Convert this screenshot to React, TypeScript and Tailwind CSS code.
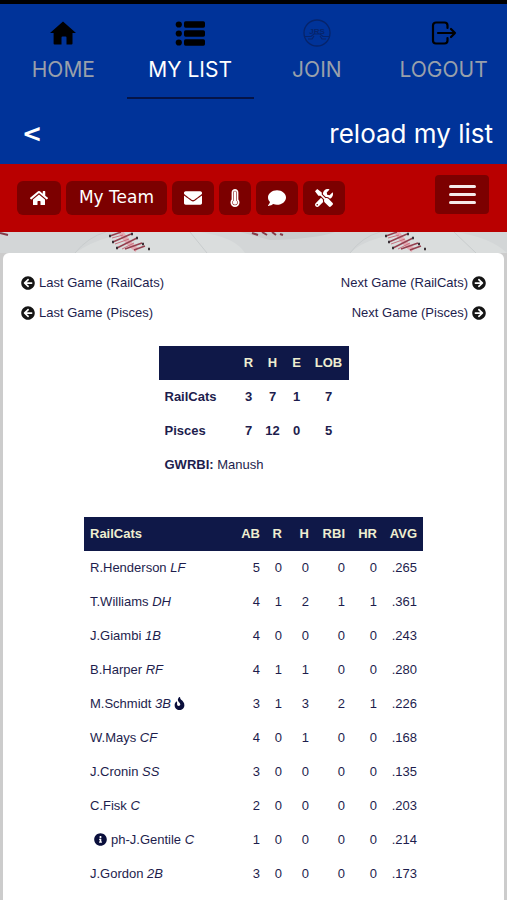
import React from 'react';
import { FaHome, FaEnvelope, FaThermometerFull, FaComment, FaTools, FaArrowCircleLeft, FaArrowCircleRight, FaInfoCircle, FaFire } from 'react-icons/fa';

const players = [
  { name: 'R.Henderson', pos: 'LF', stats: ['5', '0', '0', '0', '0', '.265'] },
  { name: 'T.Williams', pos: 'DH', stats: ['4', '1', '2', '1', '1', '.361'] },
  { name: 'J.Giambi', pos: '1B', stats: ['4', '0', '0', '0', '0', '.243'] },
  { name: 'B.Harper', pos: 'RF', stats: ['4', '1', '1', '0', '0', '.280'] },
  { name: 'M.Schmidt', pos: '3B', hot: true, stats: ['3', '1', '3', '2', '1', '.226'] },
  { name: 'W.Mays', pos: 'CF', stats: ['4', '0', '1', '0', '0', '.168'] },
  { name: 'J.Cronin', pos: 'SS', stats: ['3', '0', '0', '0', '0', '.135'] },
  { name: 'C.Fisk', pos: 'C', stats: ['2', '0', '0', '0', '0', '.203'] },
  { name: 'ph-J.Gentile', pos: 'C', sub: true, stats: ['1', '0', '0', '0', '0', '.214'] },
  { name: 'J.Gordon', pos: '2B', stats: ['3', '0', '0', '0', '0', '.173'] },
];

const scores = [
  { team: 'RailCats', line: ['3', '7', '1', '7'] },
  { team: 'Pisces', line: ['7', '12', '0', '5'] },
];

const HomeTabIcon = () => (
  <svg viewBox="0 0 26 24" className="h-6 w-[26px]" fill="#000">
    <path d="M13 0.500 26 12H22.500V22.500a1 1 0 0 1-1 1H16.500v-7a1 1 0 0 0-1-1h-3a1 1 0 0 0-1 1v7H4.600a1 1 0 0 1-1-1V12H0z" />
  </svg>
);

const ListTabIcon = () => (
  <svg viewBox="0 0 30 25" className="h-[25px] w-[30px]" fill="#000">
    {[3.5, 12.5, 21.5].map((y) => (
      <g key={y}>
        <circle cx="3.800" cy={y} r="3.100" />
        <rect x="9" y={y - 3.2} width="21" height="6.400" rx="1.600" />
      </g>
    ))}
  </svg>
);

const LogoutTabIcon = () => (
  <svg viewBox="0 0 26 24" className="h-6 w-[26px]" fill="none" stroke="#000" strokeWidth="2.200" strokeLinecap="round" strokeLinejoin="round">
    <path d="M16.500 7V4.500a3 3 0 0 0-3-3H5a3 3 0 0 0-3 3v15a3 3 0 0 0 3 3h8.500a3 3 0 0 0 3-3V17M7 12h17M20 8l4 4-4 4" />
  </svg>
);

const JoinTabIcon = () => (
  <svg viewBox="0 0 28 28" className="size-7" fill="none" stroke="#06246b">
    <circle cx="14" cy="14" r="13" strokeWidth="1.300" />
    <path d="M2 17.500h6l3-2.500h6l3 2.500h6M5 20h4l2-3M23 20h-4l-2-3" strokeWidth="1.200" />
    <text x="14" y="15" textAnchor="middle" fontSize="8" fontWeight="700" fontFamily="Liberation Sans" fill="#06246b" stroke="none">JRS</text>
  </svg>
);

const tabs = [
  { label: 'HOME', icon: <HomeTabIcon /> },
  { label: 'MY LIST', icon: <ListTabIcon />, active: true },
  { label: 'JOIN', icon: <JoinTabIcon /> },
  { label: 'LOGOUT', icon: <LogoutTabIcon /> },
];

const toolButton = 'flex h-[34px] items-center justify-center rounded-md bg-[#7c0000] text-white';

// One baseball seam: stitches crossing the thread, with a hole at each end
const Seam = ({ x }: { x: number }) => (
  <g transform={`translate(${x} 0)`}>
    <path d="M12 0Q17 10 28 18" stroke="#e3aab3" strokeWidth="5" />
    <path d="M1 4 12 0M4 10 22 2M8 16 28 6M16 17 33 11M25 18 36 14" stroke="#94404f" strokeWidth="1.500" />
    <path d="M3 6 14 3M6 12 20 7M13 17 25 11" stroke="#c9707f" />
    <path d="M0 4h2M3 10h2M7 16h2M22 2h2M27 6h2M33 12h2M39 17h2" stroke="#3b3036" strokeWidth="2.500" />
  </g>
);

const Baseballs = () => (
  <svg viewBox="0 0 507 21" preserveAspectRatio="xMidYMin slice" className="block h-[21px] w-full bg-[#d3d6d7]" fill="none">
    <path d="M75 21Q105 0 150 0H200Q235 5 245 21ZM350 21Q370 2 420 0H455Q490 5 507 21Z" fill="#dadddd" />
    <path d="M75 21Q88 5 106 0M190 0 207 21M350 21Q362 5 380 0M454 0 476 21" stroke="#c8cccd" />
    <path d="M240 0H335Q315 7 270 8Z" fill="#c9cccd" />
    <Seam x={109} />
    <Seam x={385} />
    <path d="M0 1 8 3M252 1 258 3M262 0 267 3M272 0 276 3M280 2 283 3" stroke="#843b48" strokeWidth="2" />
  </svg>
);

export default function App() {
  return (
    <div className="h-screen overflow-hidden bg-[#cccccc] font-['Liberation_Sans',sans-serif] text-[13px] text-[#1d1d4d]">
      <header className="border-t-4 border-black bg-[#003399] font-['Inter',sans-serif]">
        <nav className="grid h-[95px] grid-cols-4">
          {tabs.map((tab) => (
            <a
              key={tab.label}
              href="#"
              className={`flex flex-col items-center border-b-2 pt-[15px] text-[21px] ${
                tab.active ? 'border-[#051447] text-white' : 'border-transparent text-[#99a0ab]'
              }`}
            >
              <span className="flex h-7 items-center">{tab.icon}</span>
              <span className="mt-[9px] leading-7">{tab.label}</span>
            </a>
          ))}
        </nav>
        <div className="flex h-[65px] items-center justify-between pt-1 pr-3.5 pl-[22px] text-white">
          <a href="#" className="font-['DejaVu_Sans',sans-serif] text-2xl font-bold">&lt;</a>
          <a href="#" className="text-[26px]">reload my list</a>
        </div>
      </header>

      <div className="flex h-[68px] items-center justify-between bg-[#b90000] pr-[18px] pl-[17px]">
        <div className="flex gap-[5px]">
          <button aria-label="Home" className={`${toolButton} w-11 text-lg`}><FaHome /></button>
          <button className={`${toolButton} w-[101px] font-['DejaVu_Sans',sans-serif] text-[17px]`}>My Team</button>
          <button aria-label="Messages" className={`${toolButton} w-[42px] text-lg`}><FaEnvelope /></button>
          <button aria-label="Hot players" className={`${toolButton} w-8 text-lg`}><FaThermometerFull /></button>
          <button aria-label="Chat" className={`${toolButton} w-[42px] text-lg`}><FaComment /></button>
          <button aria-label="Tools" className={`${toolButton} w-[42px] text-lg`}><FaTools /></button>
        </div>
        <button aria-label="Menu" className="mb-2 flex h-[39px] w-[54px] flex-col items-center justify-center gap-[5px] rounded bg-[#7c0000]">
          <span className="h-[3px] w-[27px] rounded-full bg-[#f5eaea]" />
          <span className="h-[3px] w-[27px] rounded-full bg-[#f5eaea]" />
          <span className="h-[3px] w-[27px] rounded-full bg-[#f5eaea]" />
        </button>
      </div>

      <Baseballs />

      <main className="mx-[3px] rounded-t-md bg-white px-[18px] pt-5 pb-10">
        {['RailCats', 'Pisces'].map((team) => (
          <div key={team} className="mb-2.5 flex justify-between leading-5">
            <a href="#" className="flex items-center gap-1">
              <FaArrowCircleLeft className="text-sm text-[#151515]" />
              Last Game ({team})
            </a>
            <a href="#" className="flex items-center gap-1">
              Next Game ({team})
              <FaArrowCircleRight className="text-sm text-[#151515]" />
            </a>
          </div>
        ))}

        <table className="mx-auto mt-[23px] font-bold leading-5">
          <thead className="bg-[#0f1848] text-[#eeeed0]">
            <tr>
              <th className="w-[78px]" aria-label="Team" />
              <th className="w-6 py-[7px]">R</th>
              <th className="w-6">H</th>
              <th className="w-6">E</th>
              <th className="w-10">LOB</th>
            </tr>
          </thead>
          <tbody>
            {scores.map((row) => (
              <tr key={row.team}>
                <td className="px-1.5 py-[7px]">{row.team}</td>
                {row.line.map((value, i) => (
                  <td key={i} className="text-center">{value}</td>
                ))}
              </tr>
            ))}
            <tr>
              <td colSpan={5} className="px-1.5 py-[7px]">
                GWRBI: <span className="font-normal">Manush</span>
              </td>
            </tr>
          </tbody>
        </table>

        <table className="mx-auto mt-[35px] text-right leading-5">
          <thead className="bg-[#0f1848] text-[#eeeed0]">
            <tr>
              <th className="w-[146px] px-1.5 py-[7px] text-left">RailCats</th>
              <th className="w-9 pr-1.5">AB</th>
              <th className="w-[22px] pr-1.5">R</th>
              <th className="w-[27px] pr-1.5">H</th>
              <th className="w-9 pr-1.5">RBI</th>
              <th className="w-8 pr-1.5">HR</th>
              <th className="w-10 pr-1.5">AVG</th>
            </tr>
          </thead>
          <tbody>
            {players.map((player) => (
              <tr key={player.name}>
                <td className="px-1.5 py-[7px] text-left whitespace-nowrap">
                  {player.sub && <FaInfoCircle className="mr-1 ml-1 inline align-[-2px] text-[#0a0f3c]" />}
                  {player.name} <i>{player.pos}</i>
                  {player.hot && <FaFire className="ml-0.5 inline align-[-2px] text-[#0a0f3c]" />}
                </td>
                {player.stats.map((value, i) => (
                  <td key={i} className="pr-1.5">{value}</td>
                ))}
              </tr>
            ))}
          </tbody>
        </table>
      </main>
    </div>
  );
}
